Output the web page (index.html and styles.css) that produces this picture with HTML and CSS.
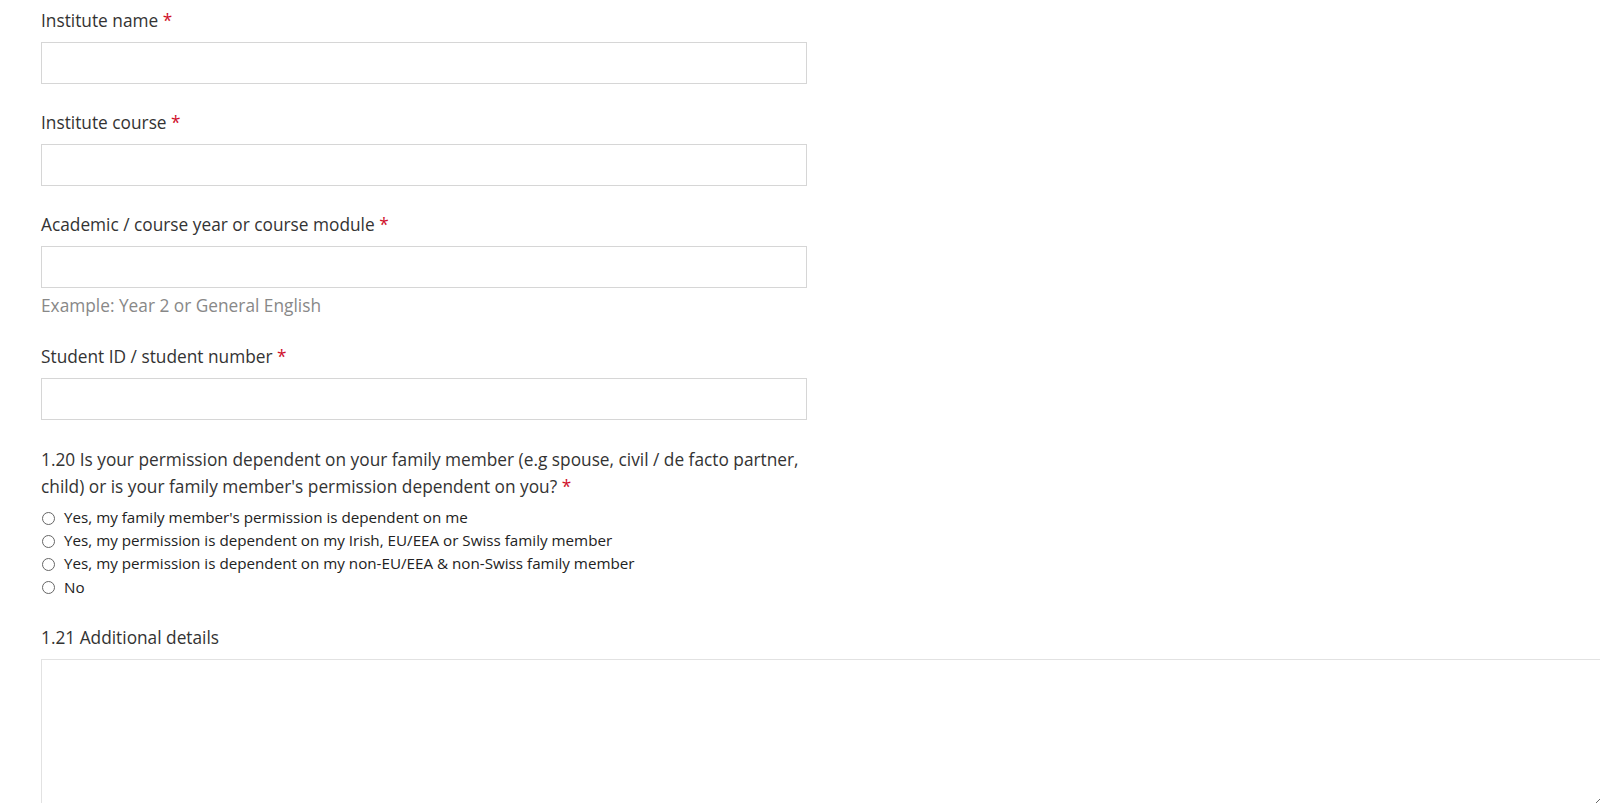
FILE: index.html
```html
<!DOCTYPE html>
<html lang="en">
<head>
    <meta charset="UTF-8">
    <meta name="viewport" content="width=device-width, initial-scale=1.0">
    <title>Student details</title>
    <link rel="stylesheet" href="styles.css">
</head>
<body>
    <form class="form">
        <div class="field">
            <label class="label" for="institute-name">Institute name <span class="req">*</span></label>
            <input class="input" type="text" id="institute-name">
        </div>

        <div class="field">
            <label class="label" for="institute-course">Institute course <span class="req">*</span></label>
            <input class="input" type="text" id="institute-course">
        </div>

        <div class="field">
            <label class="label" for="course-year">Academic / course year or course module <span class="req">*</span></label>
            <input class="input" type="text" id="course-year">
            <div class="hint">Example: Year 2 or General English</div>
        </div>

        <div class="field">
            <label class="label" for="student-id">Student ID / student number <span class="req">*</span></label>
            <input class="input" type="text" id="student-id">
        </div>

        <fieldset class="field group">
            <legend class="question">1.20 Is your permission dependent on your family member (e.g spouse, civil / de facto partner, child) or is your family member's permission dependent on you? <span class="req">*</span></legend>
            <div class="options">
                <label class="option"><input class="radio" type="radio" name="dependent"> Yes, my family member's permission is dependent on me</label>
                <label class="option"><input class="radio" type="radio" name="dependent"> Yes, my permission is dependent on my Irish, EU/EEA or Swiss family member</label>
                <label class="option"><input class="radio" type="radio" name="dependent"> Yes, my permission is dependent on my non-EU/EEA &amp; non-Swiss family member</label>
                <label class="option"><input class="radio" type="radio" name="dependent"> No</label>
            </div>
        </fieldset>

        <div class="field wide">
            <label class="label" for="details">1.21 Additional details</label>
            <textarea class="textarea" id="details"></textarea>
        </div>
    </form>
</body>
</html>
```

FILE: styles.css
```css
html {
    overflow: hidden;
}
body {
    font-family: "Open Sans", Arial, sans-serif;
    margin: 0;
    padding: 9px 0 0 41px;
    background-color: #fff;
    color: #333;
}
.form {
    width: 766px;
}
.field {
    margin: 0 0 27px 0;
}
.label {
    display: block;
    font-size: 17.3px;
    line-height: 24px;
    margin-bottom: 9px;
}
.req {
    color: #d0112b;
}
.input {
    display: block;
    box-sizing: border-box;
    width: 100%;
    height: 42px;
    margin: 0;
    border: 1px solid #d6d6d6;
    background: #fff;
    font: inherit;
}
.hint {
    margin-top: 6px;
    font-size: 17.3px;
    line-height: 24px;
    color: #888;
}
.group {
    border: 0;
    padding: 0;
    min-width: 0;
}
.question {
    padding: 0;
    font-size: 17.3px;
    line-height: 26.5px;
}
.options {
    padding-top: 6px;
}
.option {
    display: flex;
    align-items: center;
    font-size: 15.2px;
    line-height: 23.2px;
    color: #222;
}
.radio {
    appearance: none;
    -webkit-appearance: none;
    box-sizing: border-box;
    width: 13px;
    height: 13px;
    margin: 1px 9px 0 1px;
    border: 1px solid #666;
    border-radius: 50%;
    background: #fff;
    flex: none;
}
.wide {
    width: 1562px;
}
.textarea {
    display: block;
    box-sizing: border-box;
    width: 1562px;
    height: 148px;
    margin: 0;
    border: 1px solid #e2e2e2;
    font: inherit;
}
```
